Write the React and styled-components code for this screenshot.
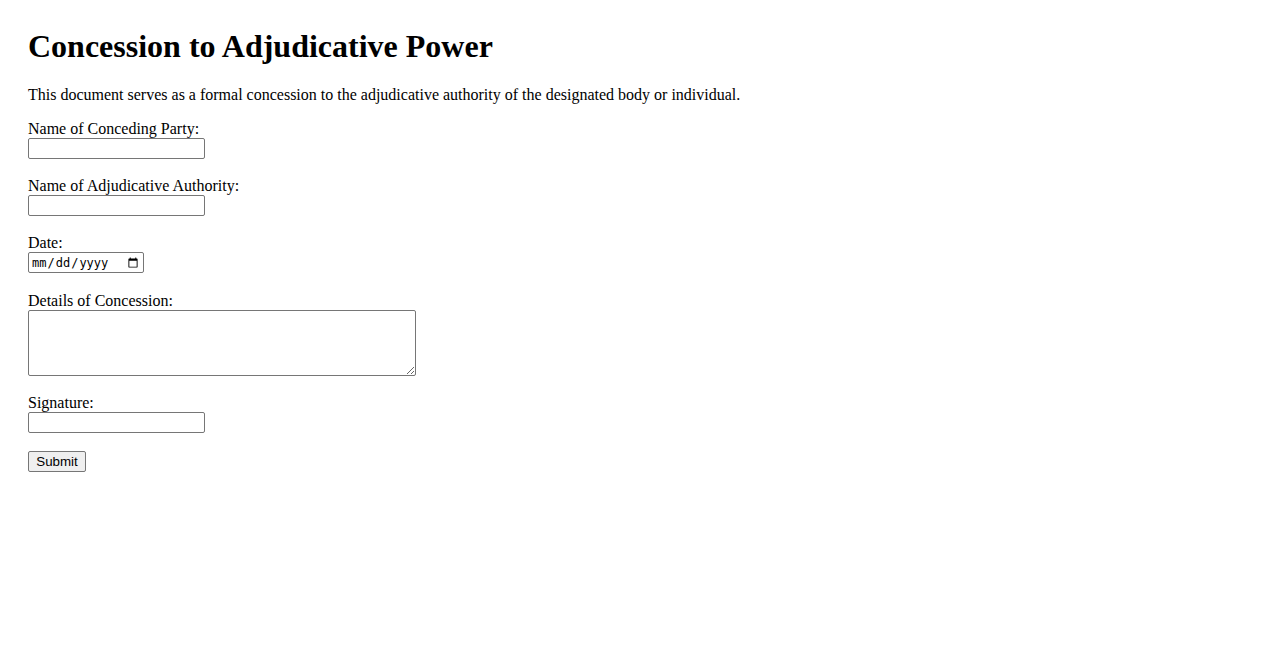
import React from "react";
import styled, { createGlobalStyle } from "styled-components";

const GlobalStyle = createGlobalStyle`
  body {
    margin: 0;
    background: #fff;
    color: #000;
    font-family: "Liberation Serif", "Times New Roman", serif;
    font-size: 16px;
  }
`;

const Page = styled.div`
  padding: 28px;
`;

const Title = styled.h1`
  margin: 0 0 21px;
  font-size: 32px;
  font-weight: bold;
  line-height: normal;
`;

const Intro = styled.p`
  margin: 0 0 16px;
  line-height: normal;
`;

const Form = styled.form`
  display: flex;
  flex-direction: column;
  align-items: flex-start;
`;

const Field = styled.div`
  display: flex;
  flex-direction: column;
  align-items: flex-start;
  margin-bottom: ${(props) => props.gap || "17.6px"};
`;

const Label = styled.label`
  display: block;
  line-height: normal;
`;

const TextInput = styled.input`
  box-sizing: border-box;
  width: ${(props) => props.width || "177px"};
  height: 21px;
  margin: 0;
  padding: 1px 2px;
  border: 1px solid #767676;
  border-radius: 2px;
  background: #fff;
  font-family: "Liberation Sans", Arial, sans-serif;
  font-size: 13.333px;
`;

const DateInput = styled(TextInput)`
  font-family: "DejaVu Sans Mono", "Liberation Mono", monospace;
  font-size: 12px;
  color: #000;
`;

const TextArea = styled.textarea`
  box-sizing: border-box;
  width: 388px;
  height: 66px;
  margin: 0;
  padding: 2px;
  border: 1px solid #767676;
  border-radius: 2px;
  font-family: "Liberation Mono", monospace;
  font-size: 13.333px;
`;

const SubmitButton = styled.button`
  box-sizing: border-box;
  width: 58px;
  height: 21px;
  margin: 0;
  padding: 1px 6px;
  border: 1px solid #767676;
  border-radius: 2px;
  background: #efefef;
  color: #000;
  font-family: "Liberation Sans", Arial, sans-serif;
  font-size: 13.333px;
  cursor: pointer;
`;

const fields = [
  { id: "conceding", label: "Name of Conceding Party:", gap: "17.6px" },
  { id: "authority", label: "Name of Adjudicative Authority:", gap: "18.6px" },
];

export default function App() {
  return (
    <>
      <GlobalStyle />
      <Page>
        <Title>Concession to Adjudicative Power</Title>
        <Intro>
          This document serves as a formal concession to the adjudicative
          authority of the designated body or individual.
        </Intro>
        <Form onSubmit={(e) => e.preventDefault()}>
          {fields.map((f) => (
            <Field key={f.id} gap={f.gap}>
              <Label htmlFor={f.id}>{f.label}</Label>
              <TextInput id={f.id} type="text" />
            </Field>
          ))}
          <Field gap="18.6px">
            <Label htmlFor="date">Date:</Label>
            <DateInput id="date" type="date" width="116px" />
          </Field>
          <Field gap="18.5px">
            <Label htmlFor="details">Details of Concession:</Label>
            <TextArea id="details" rows={4} cols={50} />
          </Field>
          <Field>
            <Label htmlFor="signature">Signature:</Label>
            <TextInput id="signature" type="text" />
          </Field>
          <SubmitButton type="submit">Submit</SubmitButton>
        </Form>
      </Page>
    </>
  );
}
